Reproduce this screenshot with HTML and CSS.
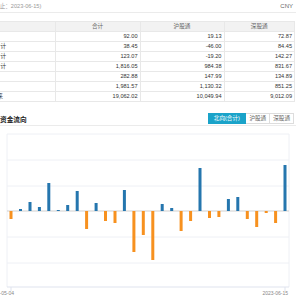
FILE: index.html
```html
<!DOCTYPE html>
<html lang="zh-CN">
<head>
  <meta charset="UTF-8" />
  <meta name="viewport" content="width=device-width, initial-scale=1.0"/>
  <title>北向资金</title>
  <link rel="stylesheet" href="styles.css">
</head>
<body>
  <div class="page">
    <div class="meta">
      <span class="date">(数据截止：2023-06-15)</span>
      <span class="unit">CNY</span>
    </div>

    <table class="flow-table">
      <thead>
        <tr>
          <th class="label"></th>
          <th>合计</th>
          <th>沪股通</th>
          <th>深股通</th>
        </tr>
      </thead>
      <tbody>
        <tr><td class="label">当日</td><td>92.00</td><td>19.13</td><td>72.87</td></tr>
        <tr><td class="label">近5日合计</td><td>38.45</td><td>-46.00</td><td>84.45</td></tr>
        <tr><td class="label">近1月合计</td><td>123.07</td><td>-19.20</td><td>142.27</td></tr>
        <tr><td class="label">近3月合计</td><td>1,816.05</td><td>984.38</td><td>831.67</td></tr>
        <tr><td class="label">本月</td><td>282.88</td><td>147.99</td><td>134.89</td></tr>
        <tr><td class="label">本年</td><td>1,981.57</td><td>1,130.32</td><td>851.25</td></tr>
        <tr><td class="label">成立以来</td><td>19,062.02</td><td>10,049.94</td><td>9,012.09</td></tr>
      </tbody>
    </table>

    <div class="section-head">
      <h2>北向资金流向</h2>
      <div class="tabs">
        <span class="tab active">北向(合计)</span>
        <span class="tab">沪股通</span>
        <span class="tab">深股通</span>
      </div>
    </div>

    <svg class="chart" width="320" height="174" viewBox="-24 126 320 174">
      <g class="grid">
        <line x1="7" y1="134" x2="289" y2="134"/>
        <line x1="7" y1="160" x2="289" y2="160"/>
        <line x1="7" y1="186" x2="289" y2="186"/>
        <line x1="7" y1="237" x2="289" y2="237"/>
        <line x1="7" y1="263" x2="289" y2="263"/>
        <line x1="7" y1="134" x2="7" y2="287"/>
        <line x1="289" y1="134" x2="289" y2="287"/>
      </g>
      <line class="zero" x1="7" y1="211" x2="289" y2="211"/>
      <g class="axis">
        <line x1="7" y1="287" x2="289" y2="287"/>
        <line x1="11" y1="287" x2="11" y2="291"/>
        <line x1="285" y1="287" x2="285" y2="291"/>
      </g>
      <g class="bars">
        <rect class="neg" x="9.5" y="211" width="3" height="8"/>
        <rect class="pos" x="19" y="209" width="3" height="2"/>
        <rect class="pos" x="28.5" y="202" width="3" height="9"/>
        <rect class="pos" x="37.9" y="207" width="3" height="4"/>
        <rect class="pos" x="47.3" y="183" width="3" height="28"/>
        <rect class="pos" x="56.8" y="210" width="3" height="1"/>
        <rect class="pos" x="66.2" y="205" width="3" height="6"/>
        <rect class="pos" x="75.7" y="191" width="3" height="20"/>
        <rect class="neg" x="85.1" y="211" width="3" height="18"/>
        <rect class="pos" x="94.6" y="203" width="3" height="8"/>
        <rect class="neg" x="104" y="211" width="3" height="10"/>
        <rect class="neg" x="113.5" y="211" width="3" height="12"/>
        <rect class="pos" x="122.9" y="190" width="3" height="21"/>
        <rect class="neg" x="132.4" y="211" width="3" height="41"/>
        <rect class="neg" x="141.8" y="211" width="3" height="24"/>
        <rect class="neg" x="151.3" y="211" width="3" height="49"/>
        <rect class="pos" x="160.7" y="204" width="3" height="7"/>
        <rect class="pos" x="170.2" y="208" width="3" height="3"/>
        <rect class="neg" x="179.6" y="211" width="3" height="20"/>
        <rect class="neg" x="189.1" y="211" width="3" height="10"/>
        <rect class="pos" x="198.5" y="168" width="3" height="43"/>
        <rect class="neg" x="208" y="211" width="3" height="7"/>
        <rect class="neg" x="217.4" y="211" width="3" height="6"/>
        <rect class="pos" x="226.9" y="199" width="3" height="12"/>
        <rect class="pos" x="236.3" y="197" width="3" height="14"/>
        <rect class="neg" x="245.8" y="211" width="3" height="8"/>
        <rect class="neg" x="255.2" y="211" width="3" height="16"/>
        <rect class="neg" x="264.7" y="211" width="3" height="2"/>
        <rect class="neg" x="274.1" y="211" width="3" height="12"/>
        <rect class="pos" x="283.5" y="165" width="3" height="46"/>
      </g>
      <text class="tick-label" x="14" y="295" text-anchor="end">2023-05-04</text>
      <text class="tick-label" x="288" y="295" text-anchor="end">2023-06-15</text>
    </svg>
  </div>
</body>
</html>
```

FILE: styles.css
```css
body {
  margin: 0;
  font-family: "Liberation Sans", "Noto Sans CJK SC", sans-serif;
  background-color: #fff;
  color: #333;
  overflow: hidden;
}

.page {
  width: 320px;
  margin-left: -24px;
}

.meta {
  display: flex;
  justify-content: space-between;
  align-items: center;
  height: 12px;
  padding: 0 3px 0 5px;
  border-bottom: 1px solid #ebebeb;
  font-size: 5.6px;
}

.date {
  color: #999;
}

.unit {
  color: #666;
  font-size: 6px;
}

.flow-table {
  width: 319px;
  margin-top: 8px;
  border-collapse: collapse;
  font-size: 5.6px;
}

.flow-table th,
.flow-table td {
  border: 1px solid #e8e8e8;
  height: 9px;
  padding: 0 2px;
  line-height: 9px;
  text-align: right;
  white-space: nowrap;
}

.flow-table th {
  background-color: #f2f2f2;
  color: #666;
  font-weight: normal;
  text-align: center;
}

.flow-table .label {
  width: 72px;
  padding-left: 3.5px;
  text-align: left;
  overflow: hidden;
}

.flow-table th:nth-child(2) {
  width: 80px;
}

.flow-table th:nth-child(3) {
  width: 79px;
}

.section-head {
  display: flex;
  justify-content: space-between;
  align-items: center;
  height: 13px;
  margin-top: 10px;
  padding: 0 2px 0 10.6px;
  border-bottom: 1px solid #ebebeb;
}

.section-head h2 {
  margin: 0;
  font-size: 6.7px;
  font-weight: bold;
  color: #222;
}

.tabs {
  display: flex;
}

.tab {
  height: 9px;
  padding: 0 3px;
  line-height: 9px;
  border: 1px solid #ddd;
  border-left: none;
  font-size: 5.6px;
  color: #666;
  background-color: #fff;
}

.tab.active {
  padding: 0 5.5px;
  border-color: #1aa3c9;
  background-color: #1aa3c9;
  color: #fff;
}

.chart {
  display: block;
}

.grid line {
  stroke: #eef0f5;
  stroke-width: 1;
}

.zero {
  stroke: #cfcfcf;
  stroke-width: 1;
}

.axis line {
  stroke: #dfe3ee;
  stroke-width: 1;
}

.pos {
  fill: #2576ae;
}

.neg {
  fill: #f7911f;
}

.tick-label {
  font-size: 5px;
  fill: #888;
}
```
